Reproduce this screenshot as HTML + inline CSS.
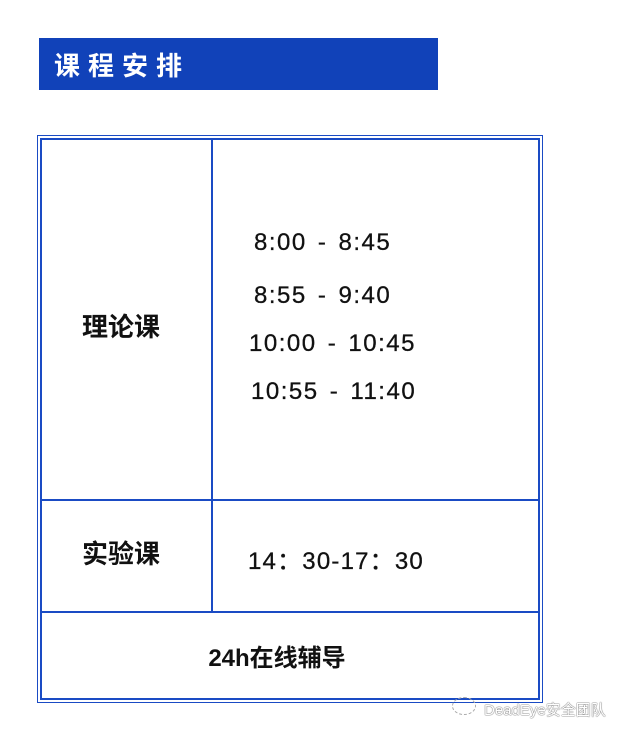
<!DOCTYPE html>
<html><head><meta charset="utf-8"><style>
body{margin:0;width:623px;height:734px;background:#fff;position:relative;overflow:hidden;font-family:"Liberation Sans","Noto Sans CJK SC",sans-serif}
.a{position:absolute}
.banner{left:39px;top:38px;width:399px;height:52px;background:#1142b9}
.banner span{position:absolute;left:15px;top:8px;color:#fff;font-size:26px;font-weight:bold;letter-spacing:8px}
.l{position:absolute;background:#1a4bc4}
.lab{position:absolute;font-size:26px;font-weight:bold;color:#111;text-align:center}
.t{position:absolute;font-size:24px;color:#111;letter-spacing:1.5px;word-spacing:3px;-webkit-text-stroke:0.3px #111}
</style></head><body>
<div class="a banner"><span>课程安排</span></div>
<div class="a" style="left:37px;top:135px;width:506px;height:568px;border:1px solid #1a4bc4;box-sizing:border-box"></div>
<div class="a" style="left:40px;top:138px;width:500px;height:562px;border:2px solid #1a4bc4;box-sizing:border-box"></div>
<div class="l" style="left:211px;top:139px;width:2px;height:474px"></div>
<div class="l" style="left:41px;top:499px;width:498px;height:2px"></div>
<div class="l" style="left:41px;top:611px;width:498px;height:2px"></div>
<div class="lab" style="left:41px;width:160px;top:307px">理论课</div>
<div class="lab" style="left:41px;width:160px;top:534px">实验课</div>
<div class="lab" style="left:41px;width:472px;top:638px;font-size:24px">24h在线辅导</div>
<div class="t" style="left:254px;top:229px">8:00 - 8:45</div>
<div class="t" style="left:254px;top:282px">8:55 - 9:40</div>
<div class="t" style="left:249px;top:330px">10:00 - 10:45</div>
<div class="t" style="left:251px;top:378px">10:55 - 11:40</div>
<div class="t" style="left:248px;top:541px;letter-spacing:1.2px">14：30-17：30</div>
<div class="a" style="left:452px;top:697px;width:22px;height:16px;border-radius:50%;border:1px dashed #aaa"></div>
<div class="a" style="left:484px;top:699px;font-size:15px;color:#fff;text-shadow:0 0 1px #555,0 0 1px #555">DeadEye安全团队</div>
</body></html>
